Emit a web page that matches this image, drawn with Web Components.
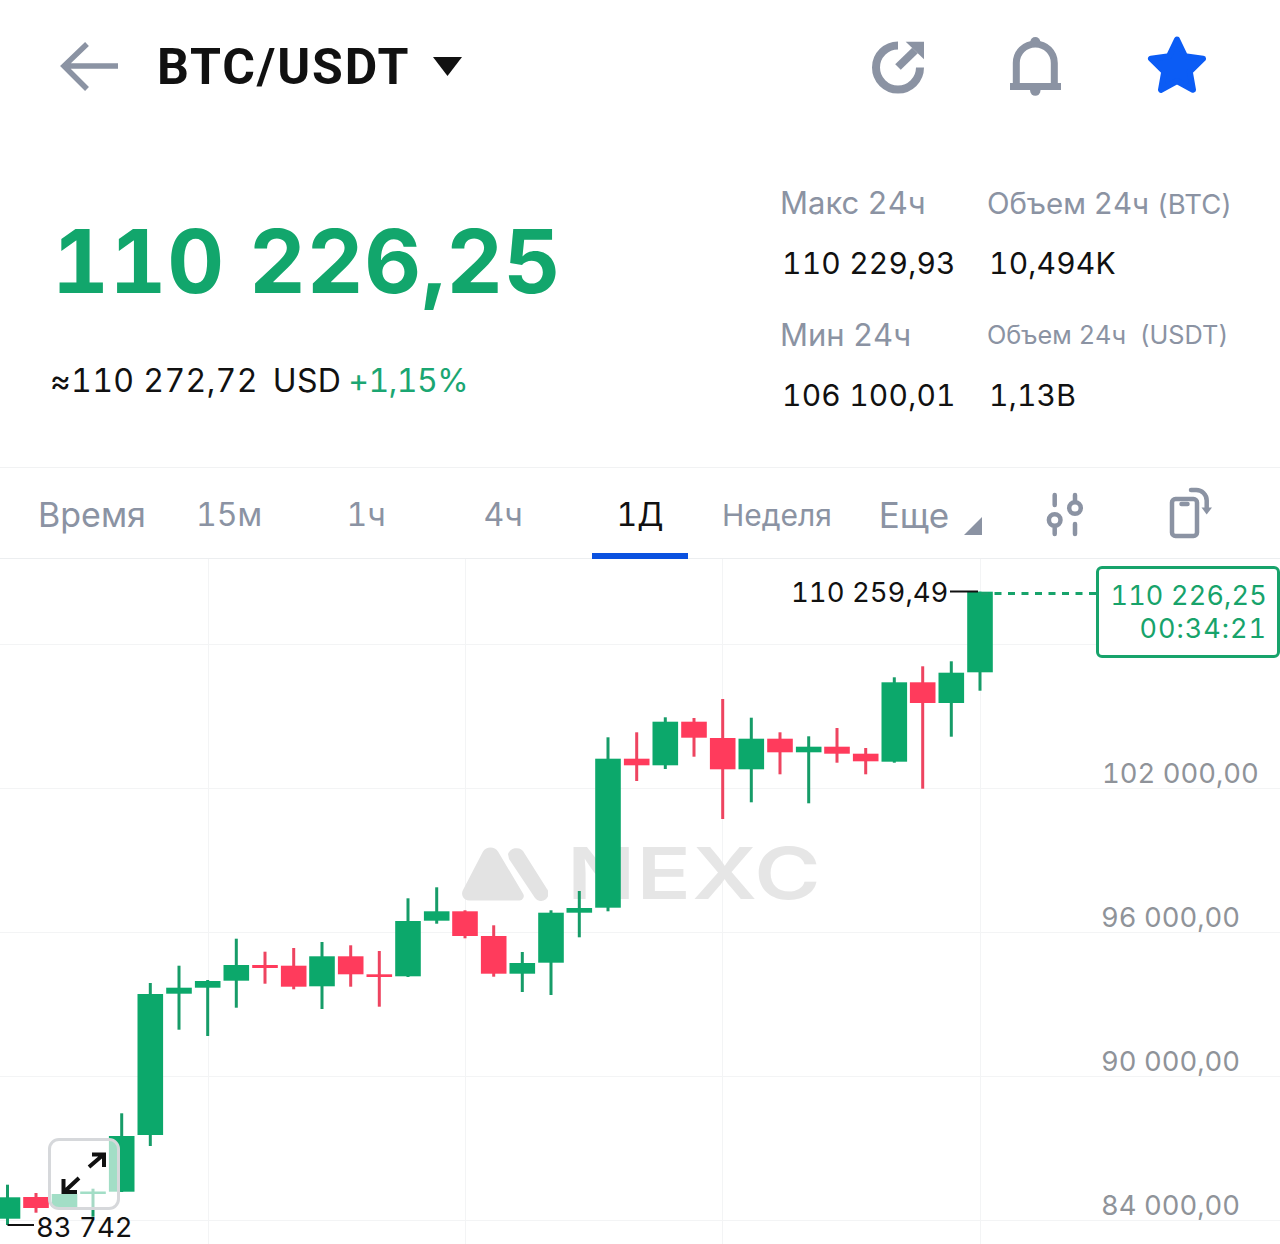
<!DOCTYPE html>
<html lang="ru">
<head>
<meta charset="utf-8">
<title>BTC/USDT</title>
<style>
  html, body { margin: 0; padding: 0; background: #fff; }
  body { width: 1280px; height: 1244px; overflow: hidden; font-family: Inter, "Noto Sans", sans-serif; color: #111; font-variant-numeric: tabular-nums; }
  .paren { font-size: 27.500px; }
  .unit { margin-left: 6px; }
</style>
</head>
<body>
<nx-header>BTC/USDT</nx-header>
<nx-ticker>
  <span slot="price">110 226,25</span>
  <span slot="fiat">≈110 272,72 <span class="unit">USD</span></span>
  <span slot="change">+1,15%</span>
  <nx-stat><span slot="label">Макс 24ч</span>110 229,93</nx-stat>
  <nx-stat><span slot="label" style="font-size:29.500px">Объем 24ч <span class="paren">(BTC)</span></span>10,494K</nx-stat>
  <nx-stat><span slot="label">Мин 24ч</span>106 100,01</nx-stat>
  <nx-stat small><span slot="label">Объем 24ч&nbsp; (USDT)</span>1,13B</nx-stat>
</nx-ticker>
<nx-tabs></nx-tabs>
<nx-chart></nx-chart>

<script>
const GRAY = "#8b93a3";

class NxHeader extends HTMLElement {
  constructor() {
    super();
    this.attachShadow({ mode: "open" });
    this.shadowRoot.innerHTML = `
    <style>
      :host { display: flex; align-items: flex-start; height: 134px; box-sizing: border-box; padding: 36px 72px 0 58px; }
      svg { display: block; }
      #title { font: 700 50px/62px Roboto, sans-serif; color: #111; margin-left: 33px; letter-spacing: 1.850px; }
      #caret { margin: 21px 0 0 22px; }
      #actions { margin-left: auto; display: flex; }
      #bell { margin: 0 82px 0 80px; }
    </style>
    <svg width="66" height="60" viewBox="58 36 66 60" fill="none" stroke="${GRAY}" stroke-width="5.500">
      <path d="M118 66H64M87 44 64 66l23 23"/>
    </svg>
    <div id="title"><slot></slot></div>
    <svg id="caret" width="30" height="20" viewBox="432 57 30 20" fill="#111"><path d="M433 57h29L447.500 76z"/></svg>
    <div id="actions">
      <svg width="60" height="60" viewBox="868 36 60 60" fill="none" stroke="${GRAY}" stroke-width="8">
        <path d="M898 45.500A22 22 0 1 0 920 67.500"/>
        <path d="M898 67 915 50.500"/>
        <path d="M905.700 41.700H924V59.300z" fill="${GRAY}" stroke="none"/>
      </svg>
      <svg id="bell" width="56" height="60" viewBox="1008 36 56 60" fill="${GRAY}">
        <circle cx="1035.300" cy="42" r="5"/>
        <circle cx="1035.300" cy="90.500" r="5.200"/>
        <rect x="1010" y="83" width="51" height="7"/>
        <path d="M1016.300 84V63a19 19 0 0 1 38 0V84" fill="none" stroke="${GRAY}" stroke-width="7"/>
      </svg>
      <svg width="62" height="60" viewBox="1146 36 62 60" fill="#0b5cf5" stroke="#0b5cf5" stroke-width="6" stroke-linejoin="round">
        <path d="M1177 39.500 1184.900 56.100 1203 58.700 1189.800 71.700 1193 89.800 1177 81 1161 89.800 1164.200 71.700 1151 58.700 1169.100 56.100z"/>
      </svg>
    </div>
    `;
  }
}
customElements.define("nx-header", NxHeader);

class NxStat extends HTMLElement {
  constructor() {
    super();
    this.attachShadow({ mode: "open" });
    this.shadowRoot.innerHTML = `
    <style>
      :host { display: block; height: 132px; }
      #label { font-size: 31px; line-height: 40px; color: ${GRAY}; height: 40px; white-space: nowrap; }
      :host([small]) #label { font-size: 25.300px; }
      #value { font-size: 30px; line-height: 40px; color: #111; margin: 20px 0 0 2px; letter-spacing: .2px; white-space: nowrap; }
    </style>
    <div id="label"><slot name="label"></slot></div>
    <div id="value"><slot></slot></div>
    `;
  }
}
customElements.define("nx-stat", NxStat);

class NxTicker extends HTMLElement {
  constructor() {
    super();
    this.attachShadow({ mode: "open" });
    this.shadowRoot.innerHTML = `
    <style>
      :host { display: flex; height: 333px; box-sizing: border-box; }
      #left { width: 780px; box-sizing: border-box; padding: 74px 0 0 50px; }
      #price { font-size: 88px; line-height: 106px; font-weight: 700; color: #12a66c; margin-left: 2px; letter-spacing: .7px; white-space: nowrap; }
      #sub { display: flex; gap: 7px; margin-top: 47px; font-size: 32px; line-height: 40px; letter-spacing: .35px; white-space: nowrap; }
      #change { color: #1ba672; letter-spacing: -.5px; }
      #stats { display: grid; grid-template-columns: 207px 1fr; align-content: start; padding-top: 49px; }
    </style>
    <div id="left">
      <div id="price"><slot name="price"></slot></div>
      <div id="sub"><span><slot name="fiat"></slot></span><span id="change"><slot name="change"></slot></span></div>
    </div>
    <div id="stats"><slot></slot></div>
    `;
  }
}
customElements.define("nx-ticker", NxTicker);

class NxTabs extends HTMLElement {
  constructor() {
    super();
    this.attachShadow({ mode: "open" });
    const names = ["Время", "15м", "1ч", "4ч", "1Д", "Неделя", "Еще"];
    const sizes = [34, 32, 32, 32, 32, 30, 35];
    this.shadowRoot.innerHTML = `
    <style>
      :host { display: flex; height: 92px; box-sizing: border-box; border-top: 1px solid #f1f2f3; border-bottom: 1px solid #eceef0; padding-left: 23.500px; }
      #list { display: grid; grid-template-columns: repeat(7, 137px); }
      .tab { position: relative; height: 90px; text-align: center; line-height: 94px; color: ${GRAY}; }
      .tab.on { color: #111; }
      .tab.on::after { content: ""; position: absolute; left: 20.500px; width: 96px; bottom: -1px; height: 6px; background: #0b52e0; }
      #corner { position: absolute; left: 118.500px; top: 49px; }
      #tools { display: flex; align-items: flex-start; }
      svg { display: block; }
    </style>
    <div id="list">
      ${names.map((n, i) => `<div class="tab ${i == 4 ? "on" : ""}" style="font-size:${sizes[i]}px">${n}${i == 6 ? `<svg id="corner" width="18" height="18" viewBox="964 517.500 18 18" fill="${GRAY}"><path d="M964 535.500h18v-18z"/></svg>` : ""}</div>`).join("")}
    </div>
    <div id="tools">
      <svg style="margin:22px 0 0 62.500px" width="40" height="48" viewBox="1045 490 40 48" fill="none" stroke="${GRAY}" stroke-width="4.500" stroke-linecap="round">
        <path d="M1054.700 495V505M1054.700 528V534M1075 495V500M1075 524V534"/>
        <circle cx="1054.700" cy="520" r="5.800"/><circle cx="1075" cy="508" r="5.800"/>
      </svg>
      <svg style="margin:19px 0 0 83px" width="48" height="52" viewBox="1168 487 48 52" fill="none" stroke="${GRAY}" stroke-width="4.500" stroke-linecap="round">
        <rect x="1172" y="499" width="25" height="37" rx="3.500"/>
        <path d="M1181.500 504H1187.500M1191 490h5a10.500 10.500 0 0 1 10.700 10.500V509"/>
        <path d="M1201.500 507.500H1212L1206.700 514.500z" fill="${GRAY}" stroke="none"/>
      </svg>
    </div>
    `;
  }
}
customElements.define("nx-tabs", NxTabs);

// [center x, body top, body bottom, wick top, wick bottom, up?] in page pixels
const CANDLES = [
  [7.500, 1197.300, 1218.700, 1184.700, 1225, 1],
  [36, 1197, 1208, 1193, 1212.700, 0],
  [64.500, 1194, 1207, 1192, 1210, 1],
  [93, 1191.500, 1194, 1188.700, 1216.700, 1],
  [121.700, 1136, 1191.700, 1113.300, 1192, 1],
  [150.300, 994, 1135, 983, 1146, 1],
  [179, 987.700, 993.700, 965.700, 1029.700, 1],
  [207.700, 981, 987.700, 980, 1036, 1],
  [236.300, 965, 980.700, 938.700, 1007.700, 1],
  [265, 965, 968, 951.700, 983.700, 0],
  [293.700, 965.700, 986.700, 948, 989.300, 0],
  [322, 956.300, 986.300, 942, 1009, 1],
  [350.700, 956.300, 974.300, 945.300, 986.700, 0],
  [379.300, 974.300, 977, 951, 1006.700, 0],
  [408, 921, 976.300, 898.300, 977, 1],
  [436.700, 911.300, 920.700, 887.300, 923.700, 1],
  [465, 911.300, 936, 910.300, 938.300, 0],
  [493.700, 936, 973.700, 925.300, 976.700, 0],
  [522.300, 963, 973.700, 952, 992, 1],
  [551, 912.700, 962.700, 910.300, 995, 1],
  [579.300, 908, 912.700, 891, 937.300, 1],
  [608, 758.700, 907.700, 737.300, 911.300, 1],
  [636.700, 758.700, 765.300, 732.300, 781, 0],
  [665.300, 721.700, 765.300, 717.300, 769, 1],
  [694, 721.700, 737.700, 718, 756.700, 0],
  [722.700, 738, 769.300, 699, 819, 0],
  [751.300, 738.700, 769.300, 717.700, 802.300, 1],
  [780, 738.700, 752.300, 732.300, 774.300, 0],
  [808.700, 746.700, 752.300, 736.300, 803.300, 1],
  [837, 746.700, 753.700, 728, 762.700, 0],
  [865.700, 753.700, 761.300, 748, 774.300, 0],
  [894.300, 682.300, 761.700, 677.300, 762.700, 1],
  [922.700, 682.300, 703, 666.300, 788.700, 0],
  [951.300, 672.700, 703, 661.300, 736.700, 1],
  [980, 591.700, 672.300, 591.700, 690.700, 1],
];

class NxChart extends HTMLElement {
  constructor() {
    super();
    this.attachShadow({ mode: "open" });
    const grid = [644.5, 788.5, 932.5, 1076.5, 1220.5].map((y) => `<path d="M0 ${y}H1280"/>`).join("")
      + [208.5, 465.5, 722.5, 980.5].map((x) => `<path d="M${x} 559V1244"/>`).join("");
    const candles = CANDLES.map(([x, top, bottom, wTop, wBottom, up]) => {
      const body = up ? "#0ca86b" : "#ff3b5c";
      const wick = up ? "#169c68" : "#ee4460";
      return `<rect x="${x - 1.5}" y="${wTop}" width="3" height="${wBottom - wTop}" fill="${wick}"/>`
        + `<rect x="${x - 12.8}" y="${top}" width="25.600" height="${bottom - top}" fill="${body}"/>`;
    }).join("");
    const scale = [["102 000,00", 1102, 196], ["96 000,00", 1101, 340], ["90 000,00", 1101, 484], ["84 000,00", 1101, 628]];
    this.shadowRoot.innerHTML = `
    <style>
      :host { display: block; position: relative; height: 685px; overflow: hidden; }
      svg { position: absolute; left: 0; top: 0; display: block; }
      .scale, .mark { position: absolute; white-space: nowrap; line-height: 36px; }
      .scale { font-size: 27.400px; color: #8f9399; }
      .mark { font-size: 27.500px; color: #111; }
      #mark-wm { left: 462px; top: 288px; }
      #wordmark { position: absolute; left: 567px; top: 273px; font-size: 72px; line-height: 82px; font-weight: 600; color: #e6e6e6; letter-spacing: 1px; transform-origin: left center; transform: scaleX(1.25); }
      #tag { position: absolute; left: 1096px; top: 7px; width: 184px; height: 92px; box-sizing: border-box; border: 3px solid #17a36b; border-radius: 6px; padding: 0 10px 0 0; background: #fff; color: #17a36b; font-size: 27px; line-height: 33px; letter-spacing: .2px; text-align: right; display: flex; flex-direction: column; justify-content: center; }
      #tag span + span { letter-spacing: 1px; }
      #expand { position: absolute; left: 48px; top: 579px; width: 72px; height: 72px; box-sizing: border-box; border: 3px solid #d6d8db; border-radius: 11px; background: rgba(255,255,255,.62); }
      #expand svg { left: 0; top: 0; }
    </style>
    <svg width="1280" height="685" viewBox="0 559 1280 685" fill="none" stroke="#f3f4f5" stroke-width="1">${grid}</svg>
    <svg id="mark-wm" width="86" height="54" viewBox="0 0 86 54" fill="#e3e3e3">
      <path d="M21 4.500a9 9 0 0 1 15 0l25 42a4.500 4.500 0 0 1-4 7H7a7 7 0 0 1-6-10.500z"/>
      <path d="M46 7a9 9 0 0 1 15-3l24 38a7.500 7.500 0 0 1-12 9L47 12z"/>
    </svg>
    <div id="wordmark">NEXC</div>
    <svg width="1280" height="685" viewBox="0 559 1280 685">
      ${candles}
      <path d="M950 591.500H978" stroke="#111" stroke-width="2"/>
      <path d="M981 593.500H1096" stroke="#17a36b" stroke-width="3" stroke-dasharray="7 6.500"/>
      <path d="M7.500 1225H34" stroke="#111" stroke-width="2"/>
    </svg>
    ${scale.map(([t, x, y]) => `<span class="scale" style="left:${x}px;top:${y}px">${t}</span>`).join("")}
    <span class="mark" style="left:791px;top:15px">110 259,49</span>
    <span class="mark" style="left:36px;top:650px">83 742</span>
    <div id="tag"><span>110 226,25</span><span>00:34:21</span></div>
    <div id="expand">
      <svg width="66" height="66" viewBox="51 1142 66 66" fill="none" stroke="#111" stroke-width="4">
        <path d="M89 1168 103 1156M92 1155.500H104V1168"/>
        <path d="M79 1179 64 1193M63.500 1180V1193H77"/>
      </svg>
    </div>
    `;
  }
}
customElements.define("nx-chart", NxChart);
</script>
</body>
</html>
